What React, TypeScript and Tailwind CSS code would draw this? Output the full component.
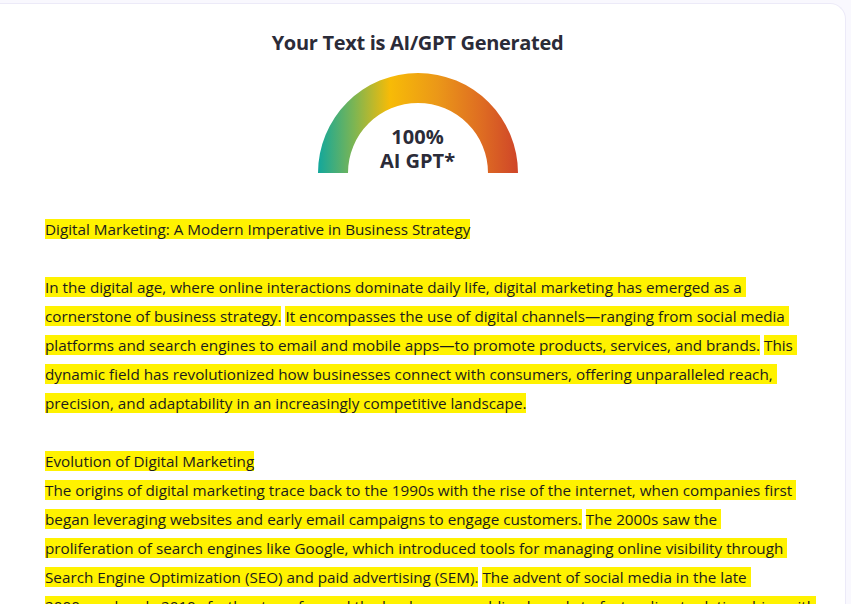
import React from 'react';

const hl = 'bg-[#fff200]';

function Gauge() {
  return (
    <div className="relative w-[200px] h-[100px]">
      <svg width="200" height="100" viewBox="0 0 200 100" className="absolute inset-0">
        <defs>
          <linearGradient id="gaugeGrad" x1="0" y1="0" x2="1" y2="0">
            <stop offset="0" stopColor="#12a79c" />
            <stop offset="0.18" stopColor="#7cb553" />
            <stop offset="0.36" stopColor="#f7bb07" />
            <stop offset="0.6" stopColor="#eb9718" />
            <stop offset="0.82" stopColor="#de6c22" />
            <stop offset="1" stopColor="#cf4529" />
          </linearGradient>
        </defs>
        <path d="M0 100 A100 100 0 0 1 200 100 L170 100 A70 70 0 0 0 30 100 Z" fill="url(#gaugeGrad)" />
      </svg>
      <div className="absolute inset-x-0 top-[52px] text-center text-[20px] leading-[24px] font-bold text-[#2b2b38]">
        100%
        <br />
        AI GPT*
      </div>
    </div>
  );
}

export default function App() {
  return (
    <div className="w-full h-[604px] overflow-hidden bg-[#f9f8fe]" style={{ fontFamily: '"Open Sans", "Noto Sans", sans-serif' }}>
      <div className="mt-[3px] w-[846px] h-[640px] bg-white rounded-tr-[16px] border-r border-t border-[#eceaf8]">
        <div className="pt-[24px] pr-[10px] flex flex-col items-center">
          <h1 className="text-[20px] leading-[30px] font-bold tracking-[-0.015em] text-[#2b2b38]">Your Text is AI/GPT Generated</h1>
          <div className="mt-[15px]">
            <Gauge />
          </div>
        </div>
        <div className="mt-[42px] pl-[45px] text-[15.25px] leading-[29px] text-[#1c1c1c] whitespace-nowrap">
          <span className={hl}>Digital Marketing: A Modern Imperative in Business Strategy</span>
          <br />
          <br />
          <span className={hl}>
            In the digital age, where online interactions dominate daily life, digital marketing has emerged as a{'\u00a0'}
            <br />
            cornerstone of business strategy.
          </span>{' '}
          <span className={hl}>
            It encompasses the use of digital channels—ranging from social media{'\u00a0'}
            <br />
            platforms and search engines to email and mobile apps—to promote products, services, and brands.
          </span>{' '}
          <span className={hl}>
            This{'\u00a0'}
            <br />
            dynamic field has revolutionized how businesses connect with consumers, offering unparalleled reach,{'\u00a0'}
            <br />
            precision, and adaptability in an increasingly competitive landscape.
          </span>
          <br />
          <br />
          <span className={hl}>Evolution of Digital Marketing</span>
          <br />
          <span className={hl}>
            The origins of digital marketing trace back to the 1990s with the rise of the internet, when companies first{'\u00a0'}
            <br />
            began leveraging websites and early email campaigns to engage customers.
          </span>{' '}
          <span className={hl}>
            The 2000s saw the{'\u00a0'}
            <br />
            proliferation of search engines like Google, which introduced tools for managing online visibility through{'\u00a0'}
            <br />
            Search Engine Optimization (SEO) and paid advertising (SEM).
          </span>{' '}
          <span className={hl}>
            The advent of social media in the late{'\u00a0'}
            <br />
            2000s and early 2010s further transformed the landscape, enabling brands to foster direct relationships with
          </span>
        </div>
      </div>
    </div>
  );
}
